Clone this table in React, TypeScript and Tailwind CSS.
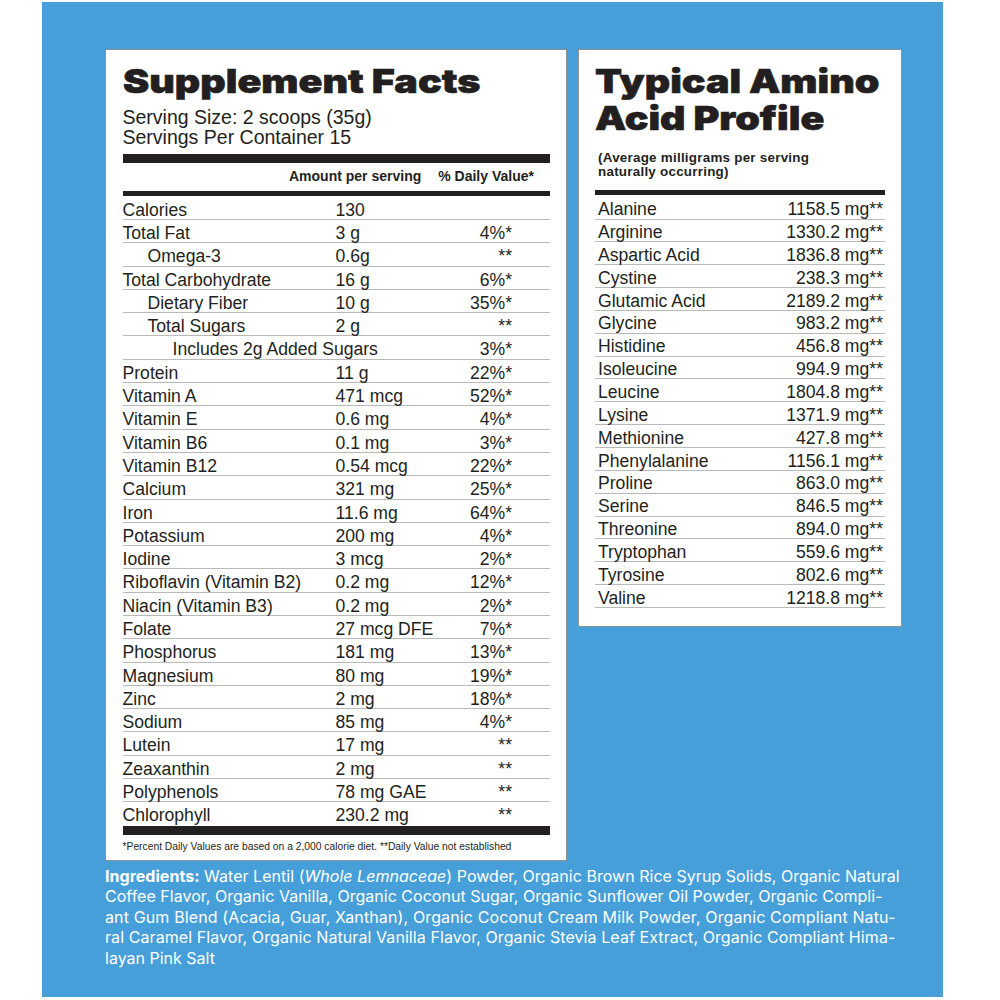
const facts: [string, string, string, number][] = [
  ["Calories", "130", "", 0],
  ["Total Fat", "3 g", "4%*", 0],
  ["Omega-3", "0.6g", "**", 1],
  ["Total Carbohydrate", "16 g", "6%*", 0],
  ["Dietary Fiber", "10 g", "35%*", 1],
  ["Total Sugars", "2 g", "**", 1],
  ["Includes 2g Added Sugars", "", "3%*", 2],
  ["Protein", "11 g", "22%*", 0],
  ["Vitamin A", "471 mcg", "52%*", 0],
  ["Vitamin E", "0.6 mg", "4%*", 0],
  ["Vitamin B6", "0.1 mg", "3%*", 0],
  ["Vitamin B12", "0.54 mcg", "22%*", 0],
  ["Calcium", "321 mg", "25%*", 0],
  ["Iron", "11.6 mg", "64%*", 0],
  ["Potassium", "200 mg", "4%*", 0],
  ["Iodine", "3 mcg", "2%*", 0],
  ["Riboflavin (Vitamin B2)", "0.2 mg", "12%*", 0],
  ["Niacin (Vitamin B3)", "0.2 mg", "2%*", 0],
  ["Folate", "27 mcg DFE", "7%*", 0],
  ["Phosphorus", "181 mg", "13%*", 0],
  ["Magnesium", "80 mg", "19%*", 0],
  ["Zinc", "2 mg", "18%*", 0],
  ["Sodium", "85 mg", "4%*", 0],
  ["Lutein", "17 mg", "**", 0],
  ["Zeaxanthin", "2 mg", "**", 0],
  ["Polyphenols", "78 mg GAE", "**", 0],
  ["Chlorophyll", "230.2 mg", "**", 0],
]

const aminos: [string, string][] = [
  ["Alanine", "1158.5"],
  ["Arginine", "1330.2"],
  ["Aspartic Acid", "1836.8"],
  ["Cystine", "238.3"],
  ["Glutamic Acid", "2189.2"],
  ["Glycine", "983.2"],
  ["Histidine", "456.8"],
  ["Isoleucine", "994.9"],
  ["Leucine", "1804.8"],
  ["Lysine", "1371.9"],
  ["Methionine", "427.8"],
  ["Phenylalanine", "1156.1"],
  ["Proline", "863.0"],
  ["Serine", "846.5"],
  ["Threonine", "894.0"],
  ["Tryptophan", "559.6"],
  ["Tyrosine", "802.6"],
  ["Valine", "1218.8"],
]

const indents = ["pl-0", "pl-[25px]", "pl-[50px]"]

// heavy headline: Inter black, stretched a bit to get Helvetica Black's width
const headline =
  "origin-left scale-x-[1.195] whitespace-nowrap font-['Inter',sans-serif] text-[33px] font-black [-webkit-text-stroke:0.6px]"

function SupplementFacts() {
  return (
    <div className="w-[462px] shrink-0 border border-[#8c9196] bg-white pl-[16.5px] pr-[16px] pt-[13px] pb-[6px] text-[#231f20]">
      <h1 className={`${headline} leading-[36px]`}>Supplement Facts</h1>
      <div className="mt-[9.4px] text-[19.5px] leading-[19.5px]">
        <p>Serving Size: 2 scoops (35g)</p>
        <p>Servings Per Container 15</p>
      </div>
      <div className="mt-[6.9px] h-[9px] bg-[#231f20]" />
      <div className="flex h-[27.4px] items-center text-[14px] font-bold leading-[27.4px]">
        <span className="ml-[166.5px]">Amount per serving</span>
        <span className="ml-[17px]">% Daily Value*</span>
      </div>
      <div className="h-[5.3px] bg-[#231f20]" />
      <div className="mt-[0.7px]">
        {facts.map(([name, amount, pct, level], i) => (
          <div
            key={name}
            className={`flex h-[23.31px] items-start pt-[3px] text-[17.6px] leading-[20px] ${i < facts.length - 1 ? "border-b border-[#b9b9b9]" : ""}`}
          >
            <span className={`w-[213px] shrink-0 whitespace-nowrap ${indents[level]}`}>{name}</span>
            <span className="flex-1 whitespace-nowrap">{amount}</span>
            <span className="mr-[38px] whitespace-nowrap text-right">{pct}</span>
          </div>
        ))}
      </div>
      <div className="mt-[0.6px] h-[9px] bg-[#231f20]" />
      <p className="mt-[4.4px] whitespace-nowrap text-[10.3px] leading-[14px]">
        *Percent Daily Values are based on a 2,000 calorie diet. **Daily Value not established
      </p>
    </div>
  )
}

function AminoProfile() {
  return (
    <div className="w-[324px] shrink-0 border border-[#8c9196] bg-white pl-[16px] pr-[16px] pt-[13px] pb-[18px] text-[#231f20]">
      <h2 className={`${headline} leading-[37.4px]`}>
        Typical Amino
        <br />
        Acid Profile
      </h2>
      <div className="mt-[13.6px] pl-[3px] text-[13.4px] font-bold leading-[13.4px] tracking-[0.25px]">
        <p>(Average milligrams per serving</p>
        <p>naturally occurring)</p>
      </div>
      <div className="mt-[12px] h-[5px] bg-[#231f20]" />
      <div className="mt-[1.5px]">
        {aminos.map(([name, mg]) => (
          <div
            key={name}
            className="flex h-[22.85px] items-start justify-between border-b border-[#b9b9b9] pl-[3px] pr-[2px] pt-[2.5px] text-[17.6px] leading-[20px]"
          >
            <span>{name}</span>
            <span>{mg} mg**</span>
          </div>
        ))}
      </div>
    </div>
  )
}

export default function App() {
  return (
    <div className="h-[1000px] w-[1000px] overflow-hidden bg-white pl-[42px] pt-[2px] font-['Liberation_Sans',Arial,sans-serif]">
      <div className="h-[995px] w-[901px] bg-[#469fd9] pl-[63px] pt-[47px]">
        <div className="flex items-start gap-[11px]">
          <SupplementFacts />
          <AminoProfile />
        </div>
        <div className="mt-[5px] font-['Inter',sans-serif] text-[16px] leading-[20.6px] text-white">
          <p className="whitespace-nowrap tracking-[0.03px]">
            <span className="font-bold">Ingredients:</span> Water Lentil (<i>Whole Lemnaceae</i>) Powder, Organic Brown Rice Syrup Solids, Organic Natural
          </p>
          <p className="whitespace-nowrap tracking-[0.02px]">
            Coffee Flavor, Organic Vanilla, Organic Coconut Sugar, Organic Sunflower Oil Powder, Organic Compli-
          </p>
          <p className="whitespace-nowrap tracking-[0.13px]">
            ant Gum Blend (Acacia, Guar, Xanthan), Organic Coconut Cream Milk Powder, Organic Compliant Natu-
          </p>
          <p className="whitespace-nowrap tracking-[0.08px]">
            ral Caramel Flavor, Organic Natural Vanilla Flavor, Organic Stevia Leaf Extract, Organic Compliant Hima-
          </p>
          <p className="whitespace-nowrap">layan Pink Salt</p>
        </div>
      </div>
    </div>
  )
}
